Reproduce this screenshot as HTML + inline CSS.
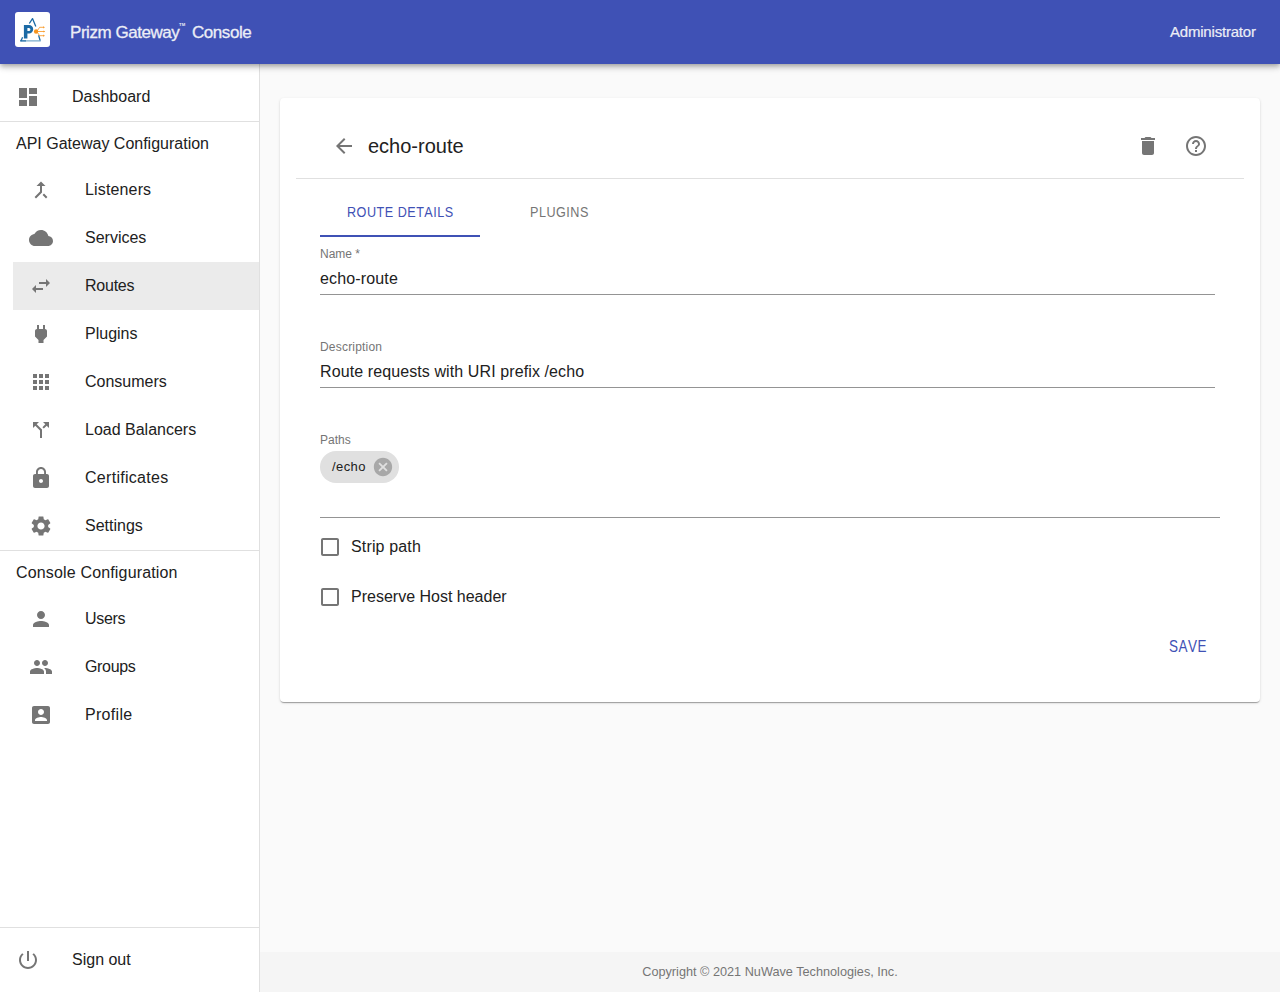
<!DOCTYPE html>
<html><head><meta charset="utf-8">
<style>
*{box-sizing:border-box;margin:0;padding:0}
html,body{width:1280px;height:992px;overflow:hidden;background:#fafafa;font-family:"Liberation Sans",sans-serif;color:#212121}
.abs{position:absolute}
.t{position:absolute;white-space:nowrap;line-height:20px}
svg.i{position:absolute;width:24px;height:24px;fill:#757575}
#appbar{position:absolute;left:0;top:0;width:1280px;height:64px;background:#3f51b5;z-index:5;
box-shadow:0px 2px 4px -1px rgba(0,0,0,0.2),0px 4px 5px 0px rgba(0,0,0,0.14),0px 1px 10px 0px rgba(0,0,0,0.12)}
#drawer{position:absolute;left:0;top:0;width:260px;height:992px;background:#fff;border-right:1px solid #e0e0e0}
.div{position:absolute;left:0;width:259px;height:1px;background:#e0e0e0}
.nav{font-size:16px}
#card{position:absolute;left:280px;top:98px;width:980px;height:604px;background:#fff;border-radius:4px;
box-shadow:0px 2px 1px -1px rgba(0,0,0,0.2),0px 1px 1px 0px rgba(0,0,0,0.14),0px 1px 3px 0px rgba(0,0,0,0.12)}
#footer{position:absolute;left:260px;top:952px;width:1020px;height:40px;background:#f5f5f5}
.lbl{font-size:12px;color:#757575}
.inp{font-size:16px;color:#212121}
.tab{font-size:14.2px;letter-spacing:0.55px;transform:scaleX(0.89);transform-origin:0 0;font-kerning:none}
.ttl{font-size:17px;letter-spacing:-0.45px;color:#eceef6;-webkit-text-stroke:0.3px #eceef6}
.ul{position:absolute;height:1px;background:#949494}
</style></head><body>

<div id="drawer">
  <!-- Dashboard -->
  <svg class="i" style="left:16px;top:85px" viewBox="0 0 24 24"><path d="M3 13h8V3H3v10zm0 8h8v-6H3v6zm10 0h8V11h-8v10zm0-18v6h8V3h-8z"/></svg>
  <div class="t nav" style="left:72px;top:87px">Dashboard</div>
  <div class="div" style="top:121px"></div>
  <div class="t nav" style="left:16px;top:134px">API Gateway Configuration</div>

  <div class="abs" style="left:13px;top:262px;width:246px;height:48px;background:#ebebeb"></div>

  <svg class="i" style="left:29px;top:178px" viewBox="0 0 24 24"><path d="M17 20.41L18.41 19 15 15.59 13.59 17 17 20.41zM7.5 8H11v5.59L5.59 19 7 20.41l6-6V8h3.5L12 3.5 7.5 8z"/></svg>
  <div class="t nav" style="left:85px;top:180px;letter-spacing:0.15px">Listeners</div>

  <svg class="i" style="left:29px;top:226px" viewBox="0 0 24 24"><path d="M19.35 10.04C18.67 6.59 15.64 4 12 4 9.110 4 6.6 5.64 5.35 8.04 2.34 8.36 0 10.91 0 14c0 3.31 2.69 6 6 6h13c2.76 0 5-2.240 5-5 0-2.64-2.05-4.78-4.65-4.96z"/></svg>
  <div class="t nav" style="left:85px;top:228px">Services</div>

  <svg class="i" style="left:29px;top:274px" viewBox="0 0 24 24"><path d="M6.99 11L3 15l3.99 4v-3H14v-2H6.99v-3zM21 9l-3.99-4v3H10v2h7.01v3L21 9z"/></svg>
  <div class="t nav" style="left:85px;top:276px;letter-spacing:-0.24px">Routes</div>

  <svg class="i" style="left:29px;top:322px" viewBox="0 0 24 24"><path d="M16.01 7L16 3h-2v4h-4V3H8v4h-.01C7 6.99 6 7.99 6 8.99v5.49L9.5 18v3h5v-3l3.5-3.51v-5.5c0-1-1-2-1.99-1.99z"/></svg>
  <div class="t nav" style="left:85px;top:324px">Plugins</div>

  <svg class="i" style="left:29px;top:370px" viewBox="0 0 24 24"><path d="M4 8h4V4H4v4zm6 12h4v-4h-4v4zm-6 0h4v-4H4v4zm0-6h4v-4H4v4zm6 0h4v-4h-4v4zm6-10v4h4V4h-4zm-6 4h4V4h-4v4zm6 6h4v-4h-4v4zm0 6h4v-4h-4v4z"/></svg>
  <div class="t nav" style="left:85px;top:372px">Consumers</div>

  <svg class="i" style="left:29px;top:418px" viewBox="0 0 24 24"><path d="M14 4l2.29 2.29-2.88 2.88 1.42 1.42 2.88-2.88L20 10V4zm-4 0H4v6l2.29-2.29 4.71 4.7V20h2v-8.41l-5.29-5.3z"/></svg>
  <div class="t nav" style="left:85px;top:420px">Load Balancers</div>

  <svg class="i" style="left:29px;top:466px" viewBox="0 0 24 24"><path d="M18 8h-1V6c0-2.76-2.24-5-5-5S7 3.24 7 6v2H6c-1.1 0-2 .9-2 2v10c0 1.1.9 2 2 2h12c1.1 0 2-.9 2-2V10c0-1.1-.9-2-2-2zm-6 9c-1.1 0-2-.9-2-2s.9-2 2-2 2 .9 2 2-.9 2-2 2zm3.1-9H8.9V6c0-1.71 1.39-3.1 3.1-3.1 1.71 0 3.1 1.39 3.1 3.1v2z"/></svg>
  <div class="t nav" style="left:85px;top:468px;letter-spacing:0.29px">Certificates</div>

  <svg class="i" style="left:29px;top:514px" viewBox="0 0 24 24"><path d="M19.14 12.94c.04-.3.06-.61.06-.94 0-.32-.02-.64-.07-.94l2.03-1.58c.18-.14.23-.41.12-.61l-1.92-3.32c-.12-.22-.37-.29-.59-.22l-2.39.96c-.5-.38-1.03-.7-1.62-.94l-.36-2.54c-.04-.24-.24-.41-.48-.41h-3.84c-.24 0-.43.17-.47.41l-.36 2.54c-.59.24-1.130.57-1.62.94l-2.39-.96c-.22-.08-.47 0-.59.22L2.74 8.87c-.12.21-.08.47.12.61l2.03 1.58c-.05.3-.09.63-.09.94s.02.64.07.94l-2.03 1.58c-.18.14-.23.41-.12.61l1.92 3.32c.12.22.37.29.59.22l2.39-.96c.5.38 1.03.7 1.62.94l.36 2.54c.05.24.24.41.48.41h3.84c.24 0 .44-.17.47-.41l.36-2.54c.59-.24 1.13-.56 1.62-.94l2.39.96c.22.08.47 0 .59-.22l1.92-3.32c.12-.22.07-.47-.12-.61l-2.01-1.58zM12 15.6c-1.98 0-3.6-1.62-3.6-3.6s1.62-3.6 3.6-3.6 3.6 1.62 3.6 3.6-1.62 3.6-3.6 3.6z"/></svg>
  <div class="t nav" style="left:85px;top:516px">Settings</div>

  <div class="div" style="top:550px"></div>
  <div class="t nav" style="left:16px;top:563px;letter-spacing:0.16px">Console Configuration</div>

  <svg class="i" style="left:29px;top:607px" viewBox="0 0 24 24"><path d="M12 12c2.21 0 4-1.79 4-4s-1.79-4-4-4-4 1.79-4 4 1.79 4 4 4zm0 2c-2.67 0-8 1.34-8 4v2h16v-2c0-2.66-5.33-4-8-4z"/></svg>
  <div class="t nav" style="left:85px;top:609px;letter-spacing:-0.3px">Users</div>

  <svg class="i" style="left:29px;top:655px" viewBox="0 0 24 24"><path d="M16 11c1.66 0 2.99-1.34 2.99-3S17.66 5 16 5c-1.66 0-3 1.34-3 3s1.34 3 3 3zm-8 0c1.66 0 2.99-1.34 2.99-3S9.66 5 8 5C6.34 5 5 6.34 5 8s1.34 3 3 3zm0 2c-2.33 0-7 1.17-7 3.5V19h14v-2.5c0-2.33-4.67-3.5-7-3.5zm8 0c-.29 0-.62.02-.97.05 1.16.84 1.97 1.97 1.97 3.45V19h6v-2.5c0-2.33-4.67-3.5-7-3.5z"/></svg>
  <div class="t nav" style="left:85px;top:657px;letter-spacing:-0.34px">Groups</div>

  <svg class="i" style="left:29px;top:703px" viewBox="0 0 24 24"><path d="M3 5v14c0 1.1.89 2 2 2h14c1.1 0 2-.9 2-2V5c0-1.1-.9-2-2-2H5c-1.11 0-2 .9-2 2zm12 4c0 1.66-1.34 3-3 3s-3-1.34-3-3 1.34-3 3-3 3 1.34 3 3zm-9 8c0-2 4-3.1 6-3.1s6 1.1 6 3.1v1H6v-1z"/></svg>
  <div class="t nav" style="left:85px;top:705px;letter-spacing:0.3px">Profile</div>

  <div class="div" style="top:927px"></div>
  <svg class="i" style="left:16px;top:948px" viewBox="0 0 24 24"><path d="M13 3h-2v10h2V3zm4.83 2.17l-1.42 1.42C17.99 7.86 19 9.81 19 12c0 3.87-3.13 7-7 7s-7-3.13-7-7c0-2.19 1.01-4.14 2.58-5.42L6.17 5.17C4.23 6.82 3 9.26 3 12c0 4.97 4.03 9 9 9s9-4.03 9-9c0-2.740-1.23-5.18-3.17-6.83z"/></svg>
  <div class="t nav" style="left:72px;top:950px">Sign out</div>
</div>

<div id="appbar">
  <div class="abs" style="left:15px;top:12px;width:35px;height:35px;background:#fff;border-radius:3px"></div>
  <svg class="abs" style="left:15px;top:12px;width:35px;height:35px" viewBox="0 0 35 35">
    <g stroke="#1b6aa5" stroke-width="1.3" fill="none" stroke-linecap="butt">
      <path d="M14.3 11.5 L17.5 6.6 L20.8 14.6" stroke-linejoin="round"/>
      <path d="M23.6 23.3 L25.2 28.7"/>
      <path d="M7.6 25.2 L5.9 28.9"/>
    </g>
    <path d="M5.2 28.2 h6 v1.4 h-6 z" fill="#1b6aa5"/>
    <path d="M11.2 28.2 h14.6 v1.4 h-14.6 z" fill="#7aaccd"/>
    <path fill="#1b6aa5" fill-rule="evenodd" d="M8.9 13 h5.1 a4.2 4.2 0 0 1 0 8.4 h-1.6 v5.2 h-3.5 z M12.4 16 h1.5 a1.5 1.5 0 0 1 0 3 h-1.5 z"/>
    <circle cx="21.1" cy="19.5" r="2.2" fill="#f7941d"/>
    <g stroke="#f7941d" stroke-width="0.8" fill="none">
      <path d="M21 19.5 H29"/>
      <path d="M22.5 18.5 L24.6 15.3 H28.6"/>
      <path d="M22.5 20.5 L24.6 23.7 H28.6"/>
    </g>
    <g fill="#f7941d">
      <path d="M28.5 18.4 L30.2 19.5 L28.5 20.6 z"/>
      <path d="M28.2 14.2 L29.9 15.3 L28.2 16.4 z"/>
      <path d="M28.2 22.6 L29.9 23.7 L28.2 24.8 z"/>
    </g>
  </svg>
  <div class="t ttl" style="left:70px;top:23px">Prizm Gateway</div>
  <div class="t" style="left:179px;top:20.5px;font-size:4.2px;line-height:8px;color:#eceef6;font-weight:bold;letter-spacing:0.2px">TM</div>
  <div class="t ttl" style="left:192px;top:23px">Console</div>
  <div class="t" style="left:1170px;top:22px;font-size:15px;color:#eceef6;letter-spacing:-0.2px;-webkit-text-stroke:0.2px #eceef6">Administrator</div>
</div>

<div id="card"></div>
<svg class="i" style="left:332px;top:134px" viewBox="0 0 24 24"><path d="M20 11H7.83l5.59-5.59L12 4l-8 8 8 8 1.41-1.41L7.83 13H20v-2z"/></svg>
<div class="t" style="left:368px;top:136px;font-size:20px">echo-route</div>
<svg class="i" style="left:1136px;top:134px" viewBox="0 0 24 24"><path d="M6 19c0 1.1.9 2 2 2h8c1.1 0 2-.9 2-2V7H6v12zM19 4h-3.5l-1-1h-5l-1 1H5v2h14V4z"/></svg>
<svg class="i" style="left:1184px;top:134px" viewBox="0 0 24 24"><path d="M11 18h2v-2h-2v2zm1-16C6.48 2 2 6.48 2 12s4.48 10 10 10 10-4.48 10-10S17.52 2 12 2zm0 18c-4.41 0-8-3.590-8-8s3.59-8 8-8 8 3.59 8 8-3.59 8-8 8zm0-14c-2.21 0-4 1.79-4 4h2c0-1.1.9-2 2-2s2 .9 2 2c0 2-3 1.75-3 5h2c0-2.25 3-2.5 3-5 0-2.21-1.79-4-4-4z"/></svg>
<div class="abs" style="left:296px;top:178px;width:948px;height:1px;background:#e0e0e0"></div>
<div class="t tab" style="left:347px;top:202px;color:#3f51b5">ROUTE DETAILS</div>
<div class="t tab" style="left:530px;top:202px;color:#757575">PLUGINS</div>
<div class="abs" style="left:320px;top:235px;width:160px;height:2px;background:#3f51b5"></div>

<div class="t lbl" style="left:320px;top:244px">Name *</div>
<div class="t inp" style="left:320px;top:269px;letter-spacing:0.15px">echo-route</div>
<div class="ul" style="left:320px;top:294px;width:895px"></div>

<div class="t lbl" style="left:320px;top:337px;letter-spacing:0.2px">Description</div>
<div class="t inp" style="left:320px;top:362px;letter-spacing:0.1px">Route requests with URI prefix /echo</div>
<div class="ul" style="left:320px;top:387px;width:895px"></div>

<div class="t lbl" style="left:320px;top:430px">Paths</div>
<div class="abs" style="left:320px;top:451px;width:79px;height:32px;border-radius:16px;background:#e0e0e0"></div>
<div class="t" style="left:332px;top:457px;font-size:13px;letter-spacing:0.4px">/echo</div>
<svg class="abs" style="left:372px;top:456px;width:22px;height:22px;fill:#a8a8a8" viewBox="0 0 24 24"><path d="M12 2C6.47 2 2 6.47 2 12s4.47 10 10 10 10-4.47 10-10S17.53 2 12 2zm5 13.59L15.59 17 12 13.41 8.41 17 7 15.59 10.59 12 7 8.41 8.41 7 12 10.59 15.59 7 17 8.41 13.41 12 17 15.59z"/></svg>
<div class="ul" style="left:320px;top:517px;width:900px"></div>

<svg class="i" style="left:318px;top:535px" viewBox="0 0 24 24"><path d="M19 5v14H5V5h14m0-2H5c-1.1 0-2 .9-2 2v14c0 1.1.9 2 2 2h14c1.1 0 2-.9 2-2V5c0-1.1-.9-2-2-2z"/></svg>
<div class="t inp" style="left:351px;top:537px;letter-spacing:0.15px">Strip path</div>
<svg class="i" style="left:318px;top:585px" viewBox="0 0 24 24"><path d="M19 5v14H5V5h14m0-2H5c-1.1 0-2 .9-2 2v14c0 1.1.9 2 2 2h14c1.1 0 2-.9 2-2V5c0-1.1-.9-2-2-2z"/></svg>
<div class="t inp" style="left:351px;top:587px">Preserve Host header</div>

<div class="t" style="left:1169px;top:637px;font-size:15.9px;color:#3f51b5;letter-spacing:0.6px;font-kerning:none;transform:scaleX(0.85);transform-origin:0 0">SAVE</div>


<div id="footer">
  <div class="t" style="left:0;width:1020px;text-align:center;top:10px;font-size:12.7px;color:#757575">Copyright © 2021 NuWave Technologies, Inc.</div>
</div>

</body></html>
